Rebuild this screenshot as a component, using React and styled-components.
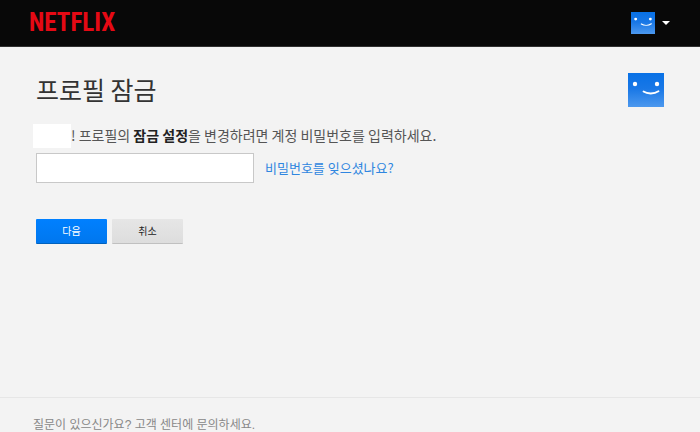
import React, { useState } from 'react';
import styled, { createGlobalStyle } from 'styled-components';

const GlobalStyle = createGlobalStyle`
  * {
    box-sizing: border-box;
  }

  body {
    margin: 0;
    background: #f3f3f3;
    color: #555;
    font-family: 'Noto Sans CJK KR', 'Liberation Sans', sans-serif;
    font-size: 14px;
  }
`;

const Page = styled.div`
  display: flex;
  flex-direction: column;
  min-height: 100vh;
`;

const Header = styled.header`
  display: flex;
  align-items: center;
  justify-content: space-between;
  height: 47px;
  padding: 0 30px 0 29px;
  background: #080808;
  border-bottom: 1px solid #303030;
`;

const Logo = styled.a`
  color: #e50914;
  font-family: 'Roboto Condensed', 'Open Sans Condensed', 'Noto Sans CJK KR', sans-serif;
  font-size: 25px;
  font-weight: bold;
  line-height: 44px;
  text-decoration: none;
`;

const AccountButton = styled.button`
  display: flex;
  align-items: center;
  gap: 7px;
  padding: 0;
  border: 0;
  background: none;
`;

const Main = styled.main`
  display: flex;
  align-items: flex-start;
  justify-content: space-between;
  flex: 1;
  padding: 26px 36px;
`;

const Form = styled.form`
  display: flex;
  flex-direction: column;
`;

const Title = styled.h1`
  margin: 0 0 19px;
  color: #333;
  font-size: 25px;
  font-weight: normal;
  line-height: 32px;
`;

const Message = styled.label`
  display: flex;
  align-items: flex-start;
  height: 24px;
  margin: 0 0 5px -3px;
  line-height: 22px;
  white-space: pre;

  b {
    color: #222;
  }
`;

const ProfileName = styled.span`
  width: 38px;
  height: 24px;
  background: #fff;
`;

const Row = styled.div`
  display: flex;
  align-items: center;
  gap: ${({ $gap }) => $gap}px;
`;

const PasswordInput = styled.input`
  width: 218px;
  height: 30px;
  padding: 0 8px;
  border: 1px solid #c8c8c8;
  background: #fff;
  font-size: 14px;
`;

const HelpLink = styled.a`
  color: #2f86e0;
  font-size: 13px;
  line-height: 18px;
  text-decoration: none;
`;

const Actions = styled(Row)`
  margin-top: 36px;
`;

const Button = styled.button`
  width: 71px;
  height: 25px;
  padding: 0;
  border: 0;
  border-radius: 1px;
  border-bottom: 1px solid ${({ $primary }) => ($primary ? '#0061bd' : '#c0c0c0')};
  background: ${({ $primary }) =>
    $primary
      ? 'linear-gradient(#0080ff, #0077ee)'
      : 'linear-gradient(#e6e6e6, #dddddd)'};
  color: ${({ $primary }) => ($primary ? '#fff' : '#222')};
  font-family: inherit;
  font-size: 10px;
  line-height: 18px;
`;

const Footer = styled.footer`
  height: 35px;
  padding: 18px 33px 0;
  border-top: 1px solid #e6e6e6;
  font-family: 'Liberation Sans', 'Noto Sans CJK KR', sans-serif;
  font-size: 12px;
  line-height: 18px;
`;

const FooterLink = styled.a`
  color: #888;
  text-decoration: none;
`;

const Avatar = ({ id, width, height }) => (
  <svg
    width={width}
    height={height}
    viewBox="0 0 36 34"
    preserveAspectRatio="none"
    aria-hidden="true"
  >
    <defs>
      <linearGradient id={id} x1="0" y1="0" x2="0" y2="1">
        <stop offset="0" stopColor="#0871e6" />
        <stop offset="0.45" stopColor="#1877e6" />
        <stop offset="1" stopColor="#4c98ee" />
      </linearGradient>
    </defs>
    <rect width="36" height="34" fill={`url(#${id})`} />
    <circle cx="7" cy="11" r="2.2" fill="#fff" />
    <circle cx="29" cy="11" r="2.2" fill="#fff" />
    <path
      d="M15.5 18.5C19.5 21.2 26 21.2 30.5 18.2"
      fill="none"
      stroke="#fff"
      strokeWidth="1.8"
      strokeLinecap="round"
    />
  </svg>
);

const App = () => {
  const [password, setPassword] = useState('');

  const submit = e => {
    e.preventDefault();
  };

  return (
    <Page>
      <GlobalStyle />
      <Header>
        <Logo href="#">NETFLIX</Logo>
        <AccountButton type="button" aria-label="계정" aria-haspopup="true">
          <Avatar id="menuAvatar" width={24} height={22} />
          <svg width="8" height="4" viewBox="0 0 8 4" aria-hidden="true">
            <path d="M0 0H8L4 4Z" fill="#fff" />
          </svg>
        </AccountButton>
      </Header>
      <Main>
        <Form onSubmit={submit}>
          <Title>프로필 잠금</Title>
          <Message htmlFor="password">
            <ProfileName />
            <span>
              ! 프로필의 <b>잠금 설정</b>을 변경하려면 계정 비밀번호를 입력하세요.
            </span>
          </Message>
          <Row $gap={11}>
            <PasswordInput
              id="password"
              type="password"
              value={password}
              onChange={e => setPassword(e.target.value)}
            />
            <HelpLink href="#">비밀번호를 잊으셨나요?</HelpLink>
          </Row>
          <Actions $gap={5}>
            <Button type="submit" $primary>
              다음
            </Button>
            <Button type="button">취소</Button>
          </Actions>
        </Form>
        <Avatar id="profileAvatar" width={36} height={34} />
      </Main>
      <Footer>
        <FooterLink href="#">질문이 있으신가요? 고객 센터에 문의하세요.</FooterLink>
      </Footer>
    </Page>
  );
};

export default App;
